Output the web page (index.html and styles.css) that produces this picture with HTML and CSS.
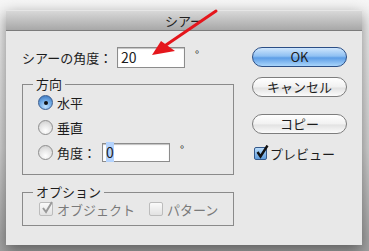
FILE: index.html
```html
<!DOCTYPE html>
<html lang="ja">

<head>
    <meta charset="UTF-8">
    <link rel="stylesheet" href="styles.css">
    <title>シアー</title>
</head>

<body>

    <div class="window">
        <div class="titlebar">シアー</div>
        <div class="content">
            <div class="left-col">
                <div class="angle-row">
                    <span class="angle-label">シアーの角度：</span>
                    <span class="field field-angle">20</span>
                    <span class="deg">°</span>
                </div>

                <div class="group group-axis">
                    <div class="group-title">方向</div>
                    <div class="option-row">
                        <span class="radio radio-on"></span>
                        <span>水平</span>
                    </div>
                    <div class="option-row">
                        <span class="radio"></span>
                        <span>垂直</span>
                    </div>
                    <div class="option-row">
                        <span class="radio"></span>
                        <span class="axis-label">角度：</span>
                        <span class="field field-axis"><span class="selected">0</span></span>
                        <span class="deg">°</span>
                    </div>
                </div>

                <div class="group group-options">
                    <div class="group-title">オプション</div>
                    <div class="option-row disabled">
                        <span class="check"><svg width="14" height="14" viewBox="0 0 14 14"><path d="M3 7 L6 11 L12 1" fill="none" stroke="#9a9a9a" stroke-width="2"/></svg></span>
                        <span class="check-text">オブジェクト</span>
                        <span class="check"></span>
                        <span>パターン</span>
                    </div>
                </div>
            </div>

            <div class="right-col">
                <div class="btn btn-default">OK</div>
                <div class="btn">キャンセル</div>
                <div class="btn btn-copy">コピー</div>
                <div class="preview-row">
                    <span class="check check-on"><svg width="14" height="14" viewBox="0 0 14 14"><path d="M2.5 7 L5.5 11.5 L12.5 0.5" fill="none" stroke="#111" stroke-width="2.4"/></svg></span>
                    <span>プレビュー</span>
                </div>
            </div>
        </div>
    </div>

    <svg class="arrow" width="369" height="251" viewBox="0 0 369 251">
        <line x1="216" y1="11" x2="166" y2="45" stroke="#e5161c" stroke-width="3" stroke-linecap="round"/>
        <polygon points="152,55 161,41 175,51" fill="#e5161c"/>
    </svg>

</body>

</html>
```

FILE: styles.css
```css
body {
    margin: 0;
    width: 369px;
    height: 251px;
    overflow: hidden;
    background: linear-gradient(#f6f6f6, #d4d4d4 60%, #a2a2a2);
    font-family: 'Noto Sans CJK JP', 'Noto Sans', sans-serif;
    font-size: 13px;
    color: #1c1c1c;
}

.window {
    margin: 10px 0 0 6px;
    width: 356px;
    height: 235px;
    background-color: #e8e8e8;
    box-shadow: 0 5px 14px rgba(0, 0, 0, 0.45);
    display: flex;
    flex-direction: column;
}

.titlebar {
    height: 21px;
    line-height: 19px;
    text-align: center;
    color: #222;
    background: linear-gradient(#d8d8d8, #a8a8a8);
    border-top: 1px solid #e6e6e6;
    border-bottom: 1px solid #7c7c7c;
    box-sizing: border-box;
}

.content {
    display: flex;
    gap: 18px;
    padding: 16px 0 0 16px;
}

.left-col {
    width: 212px;
    display: flex;
    flex-direction: column;
}

.angle-row {
    display: flex;
    align-items: center;
    height: 21px;
}

.angle-label {
    width: 95px;
    flex-shrink: 0;
    white-space: nowrap;
}

.field {
    flex-shrink: 0;
    background-color: #fff;
    border: 1px solid #8c8c8c;
    box-shadow: inset 0 1px 1px rgba(0, 0, 0, 0.25);
    box-sizing: border-box;
    padding-left: 3px;
    font-size: 14px;
    line-height: 17px;
}

.field-angle {
    width: 68px;
    height: 21px;
    line-height: 19px;
}

.field-axis {
    width: 68px;
    height: 19px;
}

.selected {
    background-color: #b4d3fd;
}

.deg {
    margin-left: 10px;
    font-size: 11px;
    margin-top: -8px;
}

.group {
    border: 1px solid #8a8a8a;
    margin-top: 16px;
    padding: 0 0 9px 15px;
    display: flex;
    flex-direction: column;
}

.group-title {
    align-self: flex-start;
    margin: -9px 0 -2px -5px;
    padding: 0 3px;
    line-height: 16px;
    background-color: #e8e8e8;
}

.group-options {
    margin-top: 17px;
    padding-bottom: 5px;
    padding-left: 16px;
}

.group-options .group-title {
    margin-left: -6px;
}

.option-row {
    display: flex;
    align-items: center;
    height: 25px;
    white-space: nowrap;
}

.group-options .option-row {
    height: 22px;
}

.radio {
    flex-shrink: 0;
    width: 15px;
    height: 15px;
    border-radius: 50%;
    box-sizing: border-box;
    border: 1px solid #8e8e8e;
    background: radial-gradient(circle at 50% 75%, #ffffff, #e4e4e4 55%, #c8c8c8);
    margin-right: 4px;
    position: relative;
}

.radio-on {
    border-color: #3a5d8f;
    background: radial-gradient(circle at 50% 80%, #bfe2ff, #6fa9e4 50%, #2f6cb8);
}

.radio-on::after {
    content: '';
    position: absolute;
    left: 4.5px;
    top: 4.5px;
    width: 4px;
    height: 4px;
    border-radius: 50%;
    background-color: #111;
}

.axis-label {
    width: 45px;
    flex-shrink: 0;
}

.disabled {
    color: #7a7a7a;
}

.check {
    flex-shrink: 0;
    width: 14px;
    height: 14px;
    box-sizing: border-box;
    border: 1px solid #bcbcbc;
    border-radius: 2px;
    background: linear-gradient(#fafafa, #e2e2e2);
    margin-right: 4px;
    display: flex;
    align-items: center;
    justify-content: center;
    overflow: visible;
}

.check svg {
    margin-top: -3px;
    margin-left: 2px;
    flex-shrink: 0;
}

.check-text {
    width: 92px;
    flex-shrink: 0;
}

.check-on {
    width: 13px;
    height: 13px;
    border-color: #35598a;
    background: linear-gradient(#b9dcfb, #5f9cdc);
}

.right-col {
    width: 95px;
    display: flex;
    flex-direction: column;
}

.btn {
    height: 20px;
    box-sizing: border-box;
    border: 1px solid #7d7d7d;
    border-radius: 10px;
    background: linear-gradient(#ffffff, #f1f1f1 50%, #e2e2e2 55%, #fbfbfb);
    text-align: center;
    line-height: 18px;
    margin-bottom: 10px;
}

.btn-default {
    border-color: #2c4f86;
    background: linear-gradient(#cfe6fd, #8fc0f2 45%, #5d9de6 55%, #a9d5fb);
}

.btn-copy {
    margin-top: 7px;
    margin-bottom: 11px;
}

.preview-row {
    display: flex;
    align-items: center;
    padding-left: 2px;
    height: 16px;
}

.preview-row .check {
    margin-right: 3px;
}

.arrow {
    position: absolute;
    left: 0;
    top: 0;
}
```
